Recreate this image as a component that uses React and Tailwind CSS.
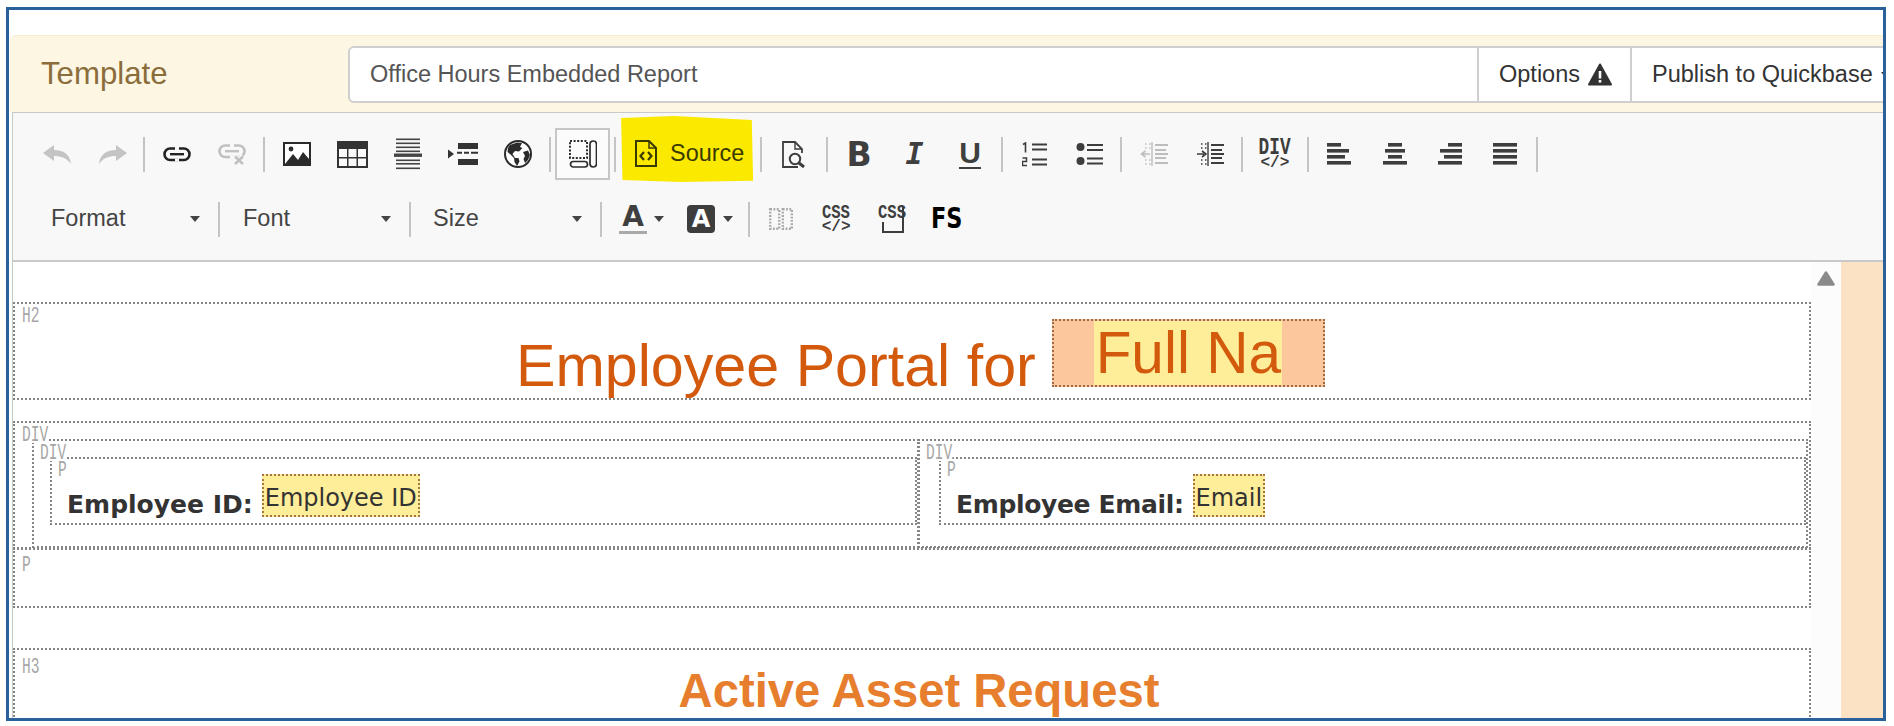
import React from "react";

const sans = "font-['Liberation_Sans',Arial,sans-serif]";

const Sep = ({ cls = "ml-[3px] mr-[4px]" }) => <div className={`w-[2px] h-[35px] shrink-0 bg-[#c4c4c4] ${cls}`} />;
const Btn = ({ children }) => <div className="w-[55.4px] h-[52px] shrink-0 flex items-center justify-center">{children}</div>;
const Caret = ({ color = "#444" }) => (
  <svg width="10" height="6" viewBox="0 0 10 6" className="shrink-0"><path d="M0 0H10L5 6Z" fill={color} /></svg>
);

const Undo = ({ flip }) => (
  <svg width="28" height="19" viewBox="0 0 28 19" style={flip ? { transform: "scaleX(-1)" } : undefined}>
    <path d="M0 8 11 0V5C20 5 27 9 28 19 24 13 18 11 11 11V16Z" fill="#c4c4c4" />
  </svg>
);
const LinkIcon = ({ color = "#222", x }) => (
  <svg width="28" height={x ? 21 : 15} viewBox={x ? "0 0 28 21" : "0 0 28 15"}>
    <rect x="1.5" y="1.5" width="25" height="11.5" rx="5.7" fill="none" stroke={color} strokeWidth="2.6" />
    <path d="M7 7.2H21" stroke={color} strokeWidth="2.4" />
    <path d="M12 1.5H16M12 13H16" stroke="#f8f8f8" strokeWidth="3" />
    {x && <path d="M16 12 25 20M25 12 16 20" stroke="#f8f8f8" strokeWidth="5" />}
    {x && <path d="M17 12.5 25 20M25 12.5 17 20" stroke={color} strokeWidth="2.6" />}
  </svg>
);
const ImageIcon = () => (
  <svg width="28" height="24" viewBox="0 0 28 24">
    <rect x="1" y="1" width="26" height="22" fill="#fff" stroke="#2b2b2b" strokeWidth="2" />
    <circle cx="8" cy="7" r="2.4" fill="#2b2b2b" />
    <path d="M2 22 10 12 15 18 20 10 26 17V22Z" fill="#2b2b2b" />
  </svg>
);
const TableIcon = () => (
  <svg width="31" height="27" viewBox="0 0 31 27">
    <rect x="0" y="0" width="31" height="27" fill="#333" />
    <rect x="2" y="8" width="8" height="8" fill="#fafafa" />
    <rect x="11.5" y="8" width="8" height="8" fill="#fafafa" />
    <rect x="21" y="8" width="8" height="8" fill="#fafafa" />
    <rect x="2" y="17.5" width="8" height="7.5" fill="#fafafa" />
    <rect x="11.5" y="17.5" width="8" height="7.5" fill="#fafafa" />
    <rect x="21" y="17.5" width="8" height="7.5" fill="#fafafa" />
  </svg>
);
const HrIcon = () => (
  <svg width="28" height="32" viewBox="0 0 28 32" fill="#444">
    <rect x="2" y="0.5" width="24" height="1.6" />
    <rect x="2" y="4.5" width="24" height="1.6" />
    <rect x="2" y="8.5" width="24" height="1.6" />
    <rect x="2" y="12.5" width="24" height="1.6" />
    <rect x="0" y="15.5" width="28" height="3.4" />
    <rect x="2" y="21.5" width="24" height="1.6" />
    <rect x="2" y="25" width="24" height="1.6" />
    <rect x="2" y="29.5" width="24" height="1.6" />
  </svg>
);
const PageBreak = () => (
  <svg width="30" height="22" viewBox="0 0 30 22" fill="#333">
    <rect x="10" y="0" width="20" height="6" />
    <rect x="10" y="16" width="20" height="6" />
    <path d="M0 6.5 6 11 0 15.5Z" />
    <path d="M9 9.8H14M16 9.8H21M23 9.8H30" stroke="#333" strokeWidth="2" />
  </svg>
);
const Globe = () => (
  <svg width="28" height="28" viewBox="0 0 28 28">
    <circle cx="14" cy="14" r="13" fill="#fff" stroke="#2b2b2b" strokeWidth="2" />
    <path d="M6 5 13 2.5 18 3 16 7 18.5 8 15 11.5 11 11 8.5 14 11 18 14.5 18 15.5 21.5 13 26 10.5 22 10 18 6 14 3.5 12 4 8Z" fill="#2b2b2b" />
    <path d="M19 12 24 10.5 26 15 24 20 21 23 19.5 19 21 16Z" fill="#2b2b2b" />
  </svg>
);
const BlocksIcon = () => (
  <svg width="28" height="28" viewBox="0 0 28 28" fill="none" stroke="#2b2b2b">
    <rect x="1" y="1" width="17" height="17" strokeWidth="2" strokeDasharray="2 1.6" />
    <rect x="21" y="1" width="6.5" height="26" rx="3.2" strokeWidth="1.7" />
    <rect x="1.5" y="21.5" width="17" height="5.5" rx="2.7" strokeWidth="1.7" />
  </svg>
);
const DocCode = () => (
  <svg width="22" height="27" viewBox="0 0 22 27" fill="none" stroke="#3a3900" strokeWidth="2">
    <path d="M1 1H14L21 8V26H1Z" />
    <path d="M14 1V8H21" strokeWidth="1.5" />
    <path d="M9 12 5.5 16 9 20M13 12 16.5 16 13 20" strokeWidth="2.2" />
  </svg>
);
const Preview = () => (
  <svg width="23" height="27" viewBox="0 0 23 27" fill="none" stroke="#3d3d3d" strokeWidth="1.8">
    <path d="M16 26H1V1H13L20 8V12" />
    <path d="M13 1V8H20" strokeWidth="1.4" />
    <circle cx="13" cy="18" r="5.2" fill="#f8f8f8" strokeWidth="2" />
    <path d="M17 22 22 26" strokeWidth="3" />
  </svg>
);
const NumList = () => (
  <svg width="25" height="25" viewBox="0 0 25 25" fill="none" stroke="#3d3d3d">
    <path d="M1 2.5 3.5 1V10.5" strokeWidth="1.6" />
    <path d="M0.5 16H4.5V19.5H0.5V23.5H5" strokeWidth="1.5" />
    <path d="M10 2.5H25M10 7.5H25M10 17.5H25M10 22.5H25" strokeWidth="1.9" />
  </svg>
);
const BulList = () => (
  <svg width="27" height="24" viewBox="0 0 27 24" fill="#3d3d3d">
    <circle cx="4.5" cy="5" r="4" />
    <circle cx="4.5" cy="19" r="4" />
    <path d="M11 3H27M11 8H27M11 16.5H27M11 21.5H27" stroke="#3d3d3d" strokeWidth="1.9" />
  </svg>
);
const Indent = ({ color, out }) => (
  <svg width="28" height="24" viewBox="0 0 28 24" fill="none" stroke={color}>
    <path d="M12 0V24" strokeWidth="1.4" />
    <path d="M15 3H28M15 8H26M15 12H28M15 16H26M15 21H28" strokeWidth="1.8" />
    <path d="M5 2H6.5M9 2H10.5M5 6H6.5M9 6H10.5M5 18H6.5M9 18H10.5M5 22H6.5M9 22H10.5" strokeWidth="1.5" />
    {out ? <path d="M10 12H3M5.5 9 1.5 12 5.5 15" strokeWidth="1.6" /> : <path d="M1 12H8M6 9 10 12 6 15" strokeWidth="1.6" />}
  </svg>
);
const Align = ({ w }) => (
  <svg width="24" height="22" viewBox="0 0 24 22" fill="#3d3d3d">
    {w.map(([x, wd], i) => <rect key={i} x={x} y={i * 6} width={wd} height="3.6" />)}
  </svg>
);
const ShowBlocks = () => (
  <svg width="24" height="22" viewBox="0 0 24 22" fill="none" stroke="#a8a8a8" strokeWidth="2.4" strokeDasharray="1.8 1.5">
    <rect x="1.2" y="1.2" width="9" height="19.6" />
    <rect x="13.8" y="1.2" width="9" height="19.6" />
  </svg>
);
const Warn = () => (
  <svg width="24" height="23" viewBox="0 0 24 23">
    <path d="M12 1.5 23 21.5H1Z" fill="#333" stroke="#333" strokeWidth="2" strokeLinejoin="round" />
    <rect x="10.7" y="8" width="2.6" height="7.5" fill="#fff" />
    <rect x="10.7" y="17" width="2.6" height="2.6" fill="#fff" />
  </svg>
);

const Combo = ({ label, w }) => (
  <div className={`${w} shrink-0 flex items-center justify-between pr-[18px] text-[23.5px] text-[#444] ${sans}`}>
    <span>{label}</span>
    <Caret />
  </div>
);

const Label = ({ children, cls = "left-[7px] top-[5px]" }) => (
  <span className={`absolute z-10 ${cls} bg-white leading-[15px] text-[22px] text-[#a6a6a6] origin-left scale-x-[0.66] font-['Liberation_Mono',monospace]`}>{children}</span>
);

const dot = "relative border-2 border-dotted border-[#858585]";

const Chip = ({ children, cls }) => (
  <span className={`${cls} mt-[15px] h-[43px] shrink-0 border-2 border-dotted border-[#a87445] bg-[#ffee99] px-[1px] pt-[7px] text-[24px] leading-[30px] text-[#333] font-['DejaVu_Sans',sans-serif]`}>{children}</span>
);

const Field = ({ label, value, box, text }) => (
  <div className={`${dot} ${box} h-[109px]`}>
    <Label cls="left-[6px] top-[5px]">DIV</Label>
    <div className={`${dot} h-[68px] flex items-start pl-[15px]`}>
      <Label cls="left-[6px] top-[4px]">P</Label>
      <span className={`${text} mt-[31px] text-[25px] leading-[30px] font-bold text-[#333] font-['DejaVu_Sans',sans-serif] whitespace-nowrap`}>{label}:</span>
      <Chip cls="ml-[9px]">{value}</Chip>
    </div>
  </div>
);

export default function App() {
  return (
    <div className="w-[1894px] h-[726px] bg-white pt-[7px] pl-[6px] overflow-hidden">
      <div className="w-[1880px] h-[714px] border-[3px] border-[#2a619b] bg-white pt-[25px] overflow-hidden">
        <div className="ml-[1px] h-[77px] flex items-center bg-[#fcf6e3] border-t border-[#f9ecd0] rounded-tl-md pl-[31px] pt-[10px] pb-[9px]">
          <div className={`w-[307px] shrink-0 text-[31.2px] text-[#8a6d3b] ${sans}`}>Template</div>
          <div className={`h-[57px] shrink-0 flex border-2 border-[#cfcfcf] rounded-l-md bg-white text-[23.5px] ${sans}`}>
            <div className="w-[1127px] flex items-center pl-[20px] text-[#555]">Office Hours Embedded Report</div>
            <div className="w-[153px] flex items-center gap-[8px] pl-[20px] border-l-2 border-[#cfcfcf] text-[#333]">Options <Warn /></div>
            <div className="w-[280px] flex items-center gap-[8px] pl-[20px] border-l-2 border-[#cfcfcf] text-[#333]">Publish to Quickbase <Caret color="#333" /></div>
          </div>
        </div>

        <div className="ml-[3px] h-[150px] border-l border-t border-b-2 border-[#c9c9c9] bg-[#f8f8f8] pt-[15px]">
          <div className="h-[52px] flex items-center pl-[16.6px]">
            <Btn><Undo /></Btn>
            <Btn><Undo flip /></Btn>
            <Sep />
            <Btn><LinkIcon /></Btn>
            <Btn><LinkIcon color="#c0c0c0" x /></Btn>
            <Sep />
            <Btn><ImageIcon /></Btn>
            <Btn><TableIcon /></Btn>
            <Btn><HrIcon /></Btn>
            <Btn><PageBreak /></Btn>
            <Btn><Globe /></Btn>
            <Sep />
            <div className="w-[55px] h-[52px] shrink-0 flex items-center justify-center border-2 border-[#c6c6c6] bg-[#fbfbfb]"><BlocksIcon /></div>
            <Sep cls="ml-[4px] mr-[5px]" />
            <div className="relative w-[132px] h-[52px] shrink-0 flex items-center">
              <div className="absolute left-0 top-[-12px] w-[132px] h-[66px] bg-[#fbe900] [clip-path:polygon(0_3%,40%_0,99%_6%,100%_98%,45%_100%,1%_97%)]" />
              <div className="relative flex items-center gap-[13px] pl-[14px] text-[23.4px] text-[#3a3900]">
                <DocCode />
                <span className={sans}>Source</span>
              </div>
            </div>
            <Sep cls="ml-[7px] mr-[4px]" />
            <Btn><Preview /></Btn>
            <Sep cls="ml-[4px] mr-[4px]" />
            <Btn><span className="text-[33px] leading-none font-bold text-[#3f3f3f] font-['DejaVu_Sans',sans-serif]">B</span></Btn>
            <Btn><span className="text-[30px] leading-none font-bold italic text-[#3f3f3f] font-['DejaVu_Sans_Mono',monospace]">I</span></Btn>
            <Btn><span className="text-[30px] leading-[28px] font-bold text-[#3f3f3f] border-b-2 border-[#3f3f3f] font-['Liberation_Sans',sans-serif]">U</span></Btn>
            <Sep />
            <Btn><NumList /></Btn>
            <Btn><BulList /></Btn>
            <Sep />
            <Btn><Indent color="#bdbdbd" out /></Btn>
            <Btn><Indent color="#3d3d3d" /></Btn>
            <Sep cls="ml-[4px] mr-[4px]" />
            <Btn>
              <div className="flex flex-col items-center text-[#3d3d3d] font-['Liberation_Mono',monospace] font-bold leading-none">
                <span className="text-[24px] leading-[17px] scale-x-[0.74]">DIV</span>
                <span className="text-[16px] leading-[13px] mt-[1px]">&lt;/&gt;</span>
              </div>
            </Btn>
            <Sep cls="ml-[4px] mr-[3px]" />
            <Btn><Align w={[[0, 14], [0, 22], [0, 18], [0, 24]]} /></Btn>
            <Btn><Align w={[[5, 14], [2, 20], [5, 14], [0, 24]]} /></Btn>
            <Btn><Align w={[[10, 14], [2, 22], [6, 18], [0, 24]]} /></Btn>
            <Btn><Align w={[[0, 24], [0, 24], [0, 24], [0, 24]]} /></Btn>
            <Sep />
          </div>

          <div className="mt-[13px] h-[52px] flex items-center pl-[38px]">
            <Combo label="Format" w="w-[167px]" />
            <Sep cls="ml-0 mr-[23px]" />
            <Combo label="Font" w="w-[166px]" />
            <Sep cls="ml-0 mr-[22px]" />
            <Combo label="Size" w="w-[167px]" />
            <Sep cls="ml-0 mr-[17px]" />
            <div className="w-[28px] shrink-0 flex flex-col items-center">
              <span className="text-[28px] leading-[25px] font-bold text-[#3f3f3f] font-['DejaVu_Sans',sans-serif]">A</span>
              <div className="w-[28px] h-[3px] mt-[2px] bg-[#a9a9a9]" />
            </div>
            <div className="ml-[7px]"><Caret /></div>
            <div className="ml-[23px] w-[28px] h-[28px] shrink-0 flex items-center justify-center rounded-[4px] bg-[#3d3d3d] text-[24px] font-bold text-white font-['DejaVu_Sans',sans-serif]">A</div>
            <div className="ml-[8px]"><Caret /></div>
            <Sep cls="ml-[15px] mr-[3px]" />
            <Btn><ShowBlocks /></Btn>
            <Btn>
              <div className="flex flex-col items-center text-[#3d3d3d] font-['Liberation_Mono',monospace] font-bold">
                <span className="text-[21px] leading-[15px] scale-x-[0.74]">CSS</span>
                <span className="text-[16px] leading-[14px]">&lt;/&gt;</span>
              </div>
            </Btn>
            <Btn>
              <div className="relative w-[26px] h-[28px] text-[#3d3d3d] font-['Liberation_Mono',monospace] font-bold">
                <span className="absolute left-0 top-0 text-[21px] leading-[15px] origin-left scale-x-[0.74]">CSS</span>
                <div className="absolute left-[4px] right-0 bottom-0 h-[26px] border-r-2 border-b-2 border-[#3d3d3d]" />
                <div className="absolute left-[4px] bottom-0 w-[2px] h-[11px] bg-[#3d3d3d]" />
              </div>
            </Btn>
            <Btn><span className="text-[28px] leading-none font-bold text-black font-['DejaVu_Sans',sans-serif] scale-x-[0.8]">FS</span></Btn>
          </div>
        </div>

        <div className="ml-[3px] h-[456px] flex border-l border-[#c9c9c9]">
          <div className="w-[1798px] shrink-0 pt-[40px] overflow-hidden bg-white">
            <div className={`${dot} h-[98px] flex items-start pl-[501px] pt-[15px]`}>
              <Label>H2</Label>
              <span className={`mt-[13px] text-[59.2px] leading-[68px] whitespace-pre text-[#d35a0c] ${sans}`}>Employee Portal for</span>
              <div className="ml-[16px] h-[68px] w-[273px] border-2 border-dotted border-[#9c6a45] bg-[#fdc79e] flex justify-center">
                <span className={`w-[188px] text-center bg-[#ffee99] text-[58.5px] leading-[64px] text-[#d35a0c] ${sans}`}>Full Na</span>
              </div>
            </div>

            <div className={`${dot} mt-[21px] h-[128px] pl-[17px] pr-[1px] pt-[16px]`}>
              <Label cls="left-[7px] top-[5px]">DIV</Label>
              <div className="flex">
                <Field label="Employee ID" value="Employee ID" box="w-[887px] shrink-0 pl-[16px] pt-[16px]" text="" />
                <Field label="Employee Email" value="Email" box="flex-1 -ml-[1px] pl-[19px] pt-[16px]" text="tracking-[-0.35px]" />
              </div>
            </div>

            <div className={`${dot} -mt-[1px] h-[60px]`}>
              <Label cls="left-[7px] top-[8px]">P</Label>
            </div>

            <div className={`${dot} mt-[40px] h-[120px] pl-[14px] pt-[13px] text-center`}>
              <Label cls="left-[7px] top-[10px]">H3</Label>
              <span className={`text-[47.2px] leading-[56px] font-bold text-[#e67e2e] ${sans}`}>Active Asset Request</span>
            </div>
          </div>
          <div className="w-[30px] shrink-0 bg-[#fcfcfc] flex justify-center pt-[9px]">
            <svg width="18" height="15" viewBox="0 0 18 15"><path d="M9 1.5 16.5 13.5H1.5Z" fill="#8a8a8a" stroke="#8a8a8a" strokeWidth="2.5" strokeLinejoin="round" /></svg>
          </div>
          <div className="flex-1 bg-[#fce2c5]" />
        </div>
      </div>
    </div>
  );
}
